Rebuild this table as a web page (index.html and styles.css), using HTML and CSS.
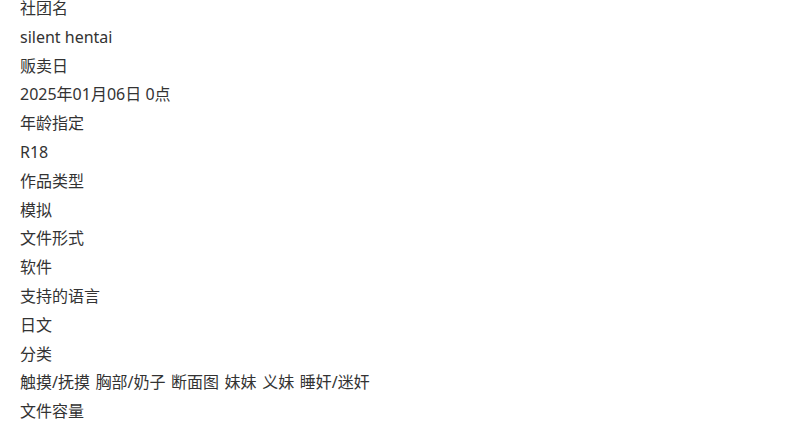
FILE: index.html
```html
<!DOCTYPE html>
<html lang="zh">
<head>
<meta charset="utf-8">
<link rel="stylesheet" href="styles.css">
</head>
<body>
<dl class="info">
  <dt>社团名</dt><dd>silent hentai</dd>
  <dt>贩卖日</dt><dd>2025年01月06日 0点</dd>
  <dt>年龄指定</dt><dd>R18</dd>
  <dt>作品类型</dt><dd>模拟</dd>
  <dt>文件形式</dt><dd>软件</dd>
  <dt>支持的语言</dt><dd>日文</dd>
  <dt>分类</dt><dd class="tags">触摸/抚摸 胸部/奶子 断面图 妹妹 义妹 睡奸/迷奸</dd>
  <dt>文件容量</dt><dd></dd>
</dl>
</body>
</html>
```

FILE: styles.css
```css
html, body {
  margin: 0;
  padding: 0;
  background: #fff;
}
body {
  font-family: "Noto Sans", "Noto Sans CJK SC", sans-serif;
  font-size: 16px;
  color: #333;
  overflow: hidden;
}
.info {
  margin: -6px 0 0 0;
  padding: 0 0 0 20px;
  line-height: 28.8px;
}
.info dt, .info dd {
  margin: 0;
  font-weight: normal;
  min-height: 28.8px;
}
.info .tags {
  word-spacing: 1.4px;
}
```
